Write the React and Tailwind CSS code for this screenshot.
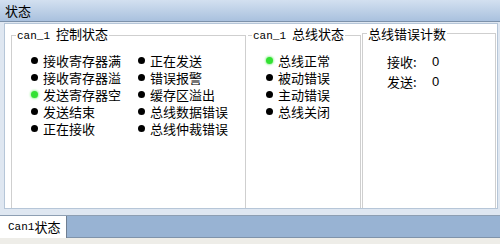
import React from 'react';

const cjk = '"Noto Sans CJK SC", "Noto Sans", sans-serif';
const mono = '"Liberation Mono", "Noto Sans CJK SC", monospace';

function Dot({ on }) {
    return (
        <span
            className={
                on
                    ? 'w-[7px] h-[7px] shrink-0 rounded-full bg-[#33e133] shadow-[0_0_2px_1px_#a8f5a8]'
                    : 'w-[7px] h-[7px] shrink-0 rounded-full bg-black'
            }
        />
    );
}

function Item({ label, on }) {
    return (
        <div className="flex items-center gap-[5px] h-[17px] shrink-0">
            <Dot on={on} />
            <span className="leading-[17px]">{label}</span>
        </div>
    );
}

function Legend({ prefix, title }) {
    return (
        <legend className="ml-[4px] px-[1px] leading-[17px] whitespace-nowrap">
            {prefix && (
                <span className="text-[11px] mr-[6px]" style={{ fontFamily: mono }}>
                    {prefix}
                </span>
            )}
            <span>{title}</span>
        </legend>
    );
}

export default function App() {
    const col1 = [
        { label: '接收寄存器满' },
        { label: '接收寄存器溢' },
        { label: '发送寄存器空', on: true },
        { label: '发送结束' },
        { label: '正在接收' },
    ];
    const col2 = ['正在发送', '错误报警', '缓存区溢出', '总线数据错误', '总线仲裁错误'];
    const bus = [
        { label: '总线正常', on: true },
        { label: '被动错误' },
        { label: '主动错误' },
        { label: '总线关闭' },
    ];

    return (
        <div
            className="w-[500px] h-[244px] flex flex-col bg-[#eceae4] text-[13px] text-black overflow-hidden"
            style={{ fontFamily: cjk }}
        >
            {/* Title bar */}
            <div className="h-[22px] shrink-0 flex items-center px-[5px] bg-gradient-to-b from-[#d3e0f0] to-[#a9c1de] border-b border-[#7d92ab]">
                <span className="leading-none">状态</span>
            </div>

            {/* Frame around panel */}
            <div className="h-[194px] shrink-0 flex flex-col bg-[#dfe7f1] pt-[1px] pl-[4px] pr-[2px] pb-[6px] border-b border-[#8e9fb3]">
                <div className="flex-1 min-h-0 flex bg-white border border-[#b6c6d8] pl-[6px] pr-[1px] pt-[1px]">
                    {/* can_1 控制状态 */}
                    <fieldset className="w-[235px] border border-[#cfcfcf] border-b-0">
                        <Legend prefix="can_1" title="控制状态" />
                        <div className="flex pl-[19px] pt-[7px]">
                            <div className="w-[107px] flex flex-col">
                                {col1.map((it) => (
                                    <Item key={it.label} label={it.label} on={it.on} />
                                ))}
                            </div>
                            <div className="flex flex-col">
                                {col2.map((l) => (
                                    <Item key={l} label={l} />
                                ))}
                            </div>
                        </div>
                    </fieldset>

                    {/* can_1 总线状态 */}
                    <fieldset className="w-[113px] ml-[2px] border border-[#cfcfcf] border-b-0 border-l-0">
                        <Legend prefix="can_1" title="总线状态" />
                        <div className="flex flex-col pl-[18px] pt-[7px]">
                            {bus.map((it) => (
                                <Item key={it.label} label={it.label} on={it.on} />
                            ))}
                        </div>
                    </fieldset>

                    {/* 总线错误计数 */}
                    <fieldset className="flex-1 ml-[1px] border border-[#cfcfcf] border-b-0">
                        <Legend title="总线错误计数" />
                        <div className="flex flex-col pl-[24px] pt-[10px]">
                            <div className="flex h-[20px] items-center">
                                <span className="w-[45px]">接收:</span>
                                <span style={{ fontFamily: '"Liberation Sans", sans-serif' }}>0</span>
                            </div>
                            <div className="flex h-[20px] items-center">
                                <span className="w-[45px]">发送:</span>
                                <span style={{ fontFamily: '"Liberation Sans", sans-serif' }}>0</span>
                            </div>
                        </div>
                    </fieldset>
                </div>
            </div>

            {/* Tab bar */}
            <div className="h-[22px] shrink-0 flex bg-[#98b3d3] border-b border-[#7f93aa]">
                <div className="w-[67px] bg-white border-r border-[#6f7f92] flex items-center pl-[8px] -mb-[1px]">
                    <span className="text-[11px]" style={{ fontFamily: mono }}>Can1</span>
                    <span>状态</span>
                </div>
            </div>
            <div className="h-[6px] shrink-0 bg-[#eeede8]" />
        </div>
    );
}
